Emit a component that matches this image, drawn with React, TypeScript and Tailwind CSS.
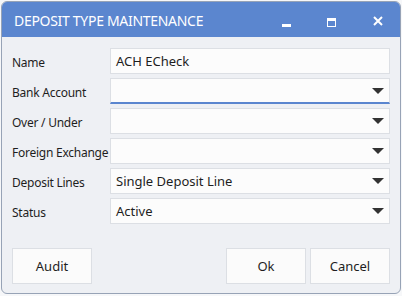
import React from "react";

const Arrow = () => (
  <svg width="12" height="6" viewBox="0 0 12 6" className="shrink-0">
    <path d="M0 0 H12 L6 6 Z" fill="#333" />
  </svg>
);

type RowProps = { label: string; value?: string; select?: boolean; active?: boolean };

const Row = ({ label, value = "", select = true, active = false }: RowProps) => (
  <div className="flex items-center h-[26px]">
    <div className="w-[98px] pt-[3px] text-[12px] tracking-[-0.25px] whitespace-nowrap text-[#1e1e1e]">{label}</div>
    <div
      className={`flex-1 h-[26px] flex items-center justify-between bg-[#fcfcfc] border border-[#dcdfe4] pl-[5px] pr-[5px] text-[13px] text-[#1e1e1e] ${
        active ? "border-b-2 border-b-[#5b86cf]" : ""
      }`}
    >
      <span className="pt-[2px]">{value}</span>
      {select && <Arrow />}
    </div>
  </div>
);

const Btn = ({ children }: { children: React.ReactNode }) => (
  <div className="w-[80px] h-[36px] flex items-center justify-center pt-[2px] bg-[#fbfbfb] border border-[#dcdfe4] text-[13px] text-[#1e1e1e]">
    {children}
  </div>
);

export default function App() {
  return (
    <div
      className="w-[402px] h-[296px] bg-[#f6f7f9] pt-px pl-px"
      style={{ fontFamily: '"Noto Sans", "Open Sans", sans-serif' }}
    >
      <div className="w-[400px] h-[293px] rounded-[6px] border border-[#97a3b6] bg-[#eef0f4] overflow-hidden flex flex-col">
        <div className="h-[35px] bg-[#5b86cf] flex items-center pl-[12px] text-white">
          <span className="text-[14px] tracking-[-0.3px] pt-px">DEPOSIT TYPE MAINTENANCE</span>
          <div className="flex-1" />
          <div className="w-[9px] h-[3px] bg-white mt-[11px] mr-[36px]" />
          <div className="w-[9px] h-[9px] border border-white border-t-[3px] mr-[37px] mt-[5px]" />
          <svg width="10" height="10" viewBox="0 0 10 10" className="mr-[17px] mt-[3px]">
            <path d="M1 1 L9 9 M9 1 L1 9" stroke="#fff" strokeWidth="2" />
          </svg>
        </div>
        <div className="flex-1 flex flex-col pt-[11px] px-[10px]">
          <div className="flex flex-col gap-[4px]">
            <Row label="Name" value="ACH ECheck" select={false} />
            <Row label="Bank Account" active />
            <Row label="Over / Under" />
            <Row label="Foreign Exchange" />
            <Row label="Deposit Lines" value="Single Deposit Line" />
            <Row label="Status" value="Active" />
          </div>
          <div className="flex mt-[24px] gap-[4px]">
            <Btn>Audit</Btn>
            <div className="flex-1" />
            <Btn>Ok</Btn>
            <Btn>Cancel</Btn>
          </div>
        </div>
      </div>
    </div>
  );
}
